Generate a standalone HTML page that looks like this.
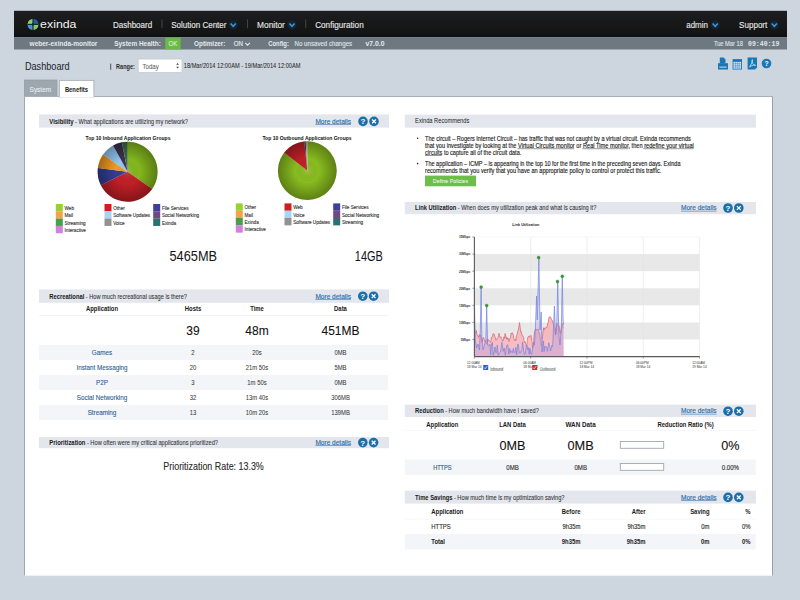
<!DOCTYPE html>
<html><head><meta charset="utf-8">
<style>
html,body{margin:0;padding:0;width:800px;height:600px;overflow:hidden;background:#cdd5de}
svg{position:absolute;left:0;top:0;font-family:"Liberation Sans",sans-serif}
</style></head><body>
<svg width="800" height="600" viewBox="0 0 800 600">
<defs>
<linearGradient id="topg" x1="0" y1="0" x2="0" y2="1"><stop offset="0" stop-color="#1d1e20"/><stop offset="0.85" stop-color="#141414"/><stop offset="1" stop-color="#0b0e12"/></linearGradient>
<radialGradient id="pg" cx="0.5" cy="0.5" r="0.5"><stop offset="0" stop-color="#fff" stop-opacity="0.14"/><stop offset="0.4" stop-color="#000" stop-opacity="0"/><stop offset="1" stop-color="#000" stop-opacity="0.32"/></radialGradient>
</defs>
<rect x="14" y="10.8" width="773" height="26.5" fill="url(#topg)"/>
<rect x="14" y="37.3" width="773" height="12.2" fill="#6d7881"/>
<g transform="translate(33,24.4)">
 <circle r="5.4" fill="#3f7cc8"/>
 <path d="M0,0 L0,-5.4 A5.4,5.4 0 0 0 -5.4,0 Z" fill="#94d060"/>
 <path d="M0,0 L0,5.4 A5.4,5.4 0 0 0 5.4,0 Z" fill="#8ccb58"/>
 <path d="M0,0 L5.4,0 A5.4,5.4 0 0 0 0,-5.4 Z" fill="#2d58a8"/>
 <path d="M0,0 L-5.4,0 A5.4,5.4 0 0 0 0,5.4 Z" fill="#4f92d4"/>
 <rect x="-0.55" y="-5.6" width="1.1" height="11.2" fill="#102a2a"/>
 <rect x="-5.6" y="-0.55" width="11.2" height="1.1" fill="#102a2a"/>
 <circle r="1.3" fill="#123030"/>
</g>
<text x="40.10" y="27.90" font-size="11.8" fill="#f2f2f2" textLength="36.40" lengthAdjust="spacingAndGlyphs">exinda</text>
<text x="112.90" y="27.60" font-size="8.8" fill="#e4e4e4" stroke="#e4e4e4" stroke-width="0.14" textLength="39.30" lengthAdjust="spacingAndGlyphs">Dashboard</text>
<text x="171.20" y="27.60" font-size="8.8" fill="#e4e4e4" stroke="#e4e4e4" stroke-width="0.14" textLength="55.30" lengthAdjust="spacingAndGlyphs">Solution Center</text>
<text x="257.10" y="27.60" font-size="8.8" fill="#e4e4e4" stroke="#e4e4e4" stroke-width="0.14" textLength="27.80" lengthAdjust="spacingAndGlyphs">Monitor</text>
<text x="315.20" y="27.60" font-size="8.8" fill="#e4e4e4" stroke="#e4e4e4" stroke-width="0.14" textLength="48.50" lengthAdjust="spacingAndGlyphs">Configuration</text>
<text x="686.20" y="27.60" font-size="8.8" fill="#e4e4e4" stroke="#e4e4e4" stroke-width="0.14" textLength="21.80" lengthAdjust="spacingAndGlyphs">admin</text>
<text x="739.10" y="27.60" font-size="8.8" fill="#e4e4e4" stroke="#e4e4e4" stroke-width="0.14" textLength="28.20" lengthAdjust="spacingAndGlyphs">Support</text>
<rect x="161.5" y="19.4" width="1" height="8.8" fill="#444"/>
<rect x="247.0" y="19.4" width="1" height="8.8" fill="#444"/>
<rect x="305.2" y="19.4" width="1" height="8.8" fill="#444"/>
<circle cx="233.2" cy="24.8" r="4.6" fill="#10263a"/>
<path d="M230.6,23.5 L233.2,26.3 L235.79999999999998,23.5" fill="none" stroke="#4f90c0" stroke-width="1.6"/>
<circle cx="292" cy="24.8" r="4.6" fill="#10263a"/>
<path d="M289.4,23.5 L292,26.3 L294.6,23.5" fill="none" stroke="#4f90c0" stroke-width="1.6"/>
<circle cx="715.2" cy="24.8" r="4.6" fill="#10263a"/>
<path d="M712.6,23.5 L715.2,26.3 L717.8000000000001,23.5" fill="none" stroke="#4f90c0" stroke-width="1.6"/>
<circle cx="774.3" cy="24.8" r="4.6" fill="#10263a"/>
<path d="M771.6999999999999,23.5 L774.3,26.3 L776.9,23.5" fill="none" stroke="#4f90c0" stroke-width="1.6"/>
<text x="29.60" y="46.40" font-size="6.8" font-weight="bold" fill="#e6eaed" textLength="67.80" lengthAdjust="spacingAndGlyphs">weber-exinda-monitor</text>
<text x="114.20" y="46.40" font-size="6.8" font-weight="bold" fill="#e6eaed" textLength="46.60" lengthAdjust="spacingAndGlyphs">System Health:</text>
<rect x="165.2" y="37.6" width="15.4" height="11.8" fill="#6abb46"/>
<text x="168.60" y="46.10" font-size="6.4" fill="#d8f0cc" stroke="#d8f0cc" stroke-width="0.14" textLength="8.60" lengthAdjust="spacingAndGlyphs">OK</text>
<text x="194.10" y="46.40" font-size="6.8" font-weight="bold" fill="#e6eaed" textLength="31.30" lengthAdjust="spacingAndGlyphs">Optimizer:</text>
<text x="233.80" y="46.40" font-size="6.6" fill="#e6eaed" stroke="#e6eaed" stroke-width="0.14" textLength="9.20" lengthAdjust="spacingAndGlyphs">ON</text>
<path d="M245.3,42.8 L247.6,45.2 L249.9,42.8" fill="none" stroke="#e6eaed" stroke-width="1.1"/>
<text x="268.20" y="46.40" font-size="6.8" font-weight="bold" fill="#e6eaed" textLength="20.70" lengthAdjust="spacingAndGlyphs">Config:</text>
<text x="294.60" y="46.40" font-size="6.6" fill="#dde2e6" stroke="#dde2e6" stroke-width="0.14" textLength="57.50" lengthAdjust="spacingAndGlyphs">No unsaved changes</text>
<text x="365.50" y="46.40" font-size="6.8" font-weight="bold" fill="#e6eaed" textLength="19.00" lengthAdjust="spacingAndGlyphs">v7.0.0</text>
<text x="713.90" y="46.40" font-size="6.4" fill="#dde2e6" stroke="#dde2e6" stroke-width="0.14" textLength="29.00" lengthAdjust="spacingAndGlyphs">Tue Mar 18</text>
<text x="748" y="46.4" font-size="6.4" font-family="Liberation Mono" font-weight="bold" fill="#e2e6e9" textLength="31.4" lengthAdjust="spacingAndGlyphs">09:40:19</text>
<text x="24.90" y="70.40" font-size="11.2" fill="#1d2731" stroke="#1d2731" stroke-width="0.05" textLength="44.70" lengthAdjust="spacingAndGlyphs">Dashboard</text>
<rect x="110.2" y="63.6" width="1" height="6.2" fill="#4a4f55"/>
<text x="116.10" y="68.90" font-size="6.9" font-weight="bold" fill="#2a2a2a" textLength="18.70" lengthAdjust="spacingAndGlyphs">Range:</text>
<rect x="138.2" y="59" width="43.8" height="13.5" rx="1" fill="#fff" stroke="#c3cad1" stroke-width="0.8"/>
<text x="142.50" y="68.60" font-size="6.6" fill="#555" stroke="#555" stroke-width="0.03" textLength="16.20" lengthAdjust="spacingAndGlyphs">Today</text>
<path d="M176.2,64.7 L177.6,63 L179,64.7 Z M176.2,66.8 L177.6,68.5 L179,66.8 Z" fill="#444"/>
<text x="183.80" y="68.20" font-size="6.3" fill="#2a2a2a" stroke="#2a2a2a" stroke-width="0.05" textLength="116.60" lengthAdjust="spacingAndGlyphs">18/Mar/2014 12:00AM - 19/Mar/2014 12:00AM</text>
<path d="M719.8,57.6 h3.8 l1.9,1.9 v3.9 h-5.7 z" fill="#1b76b6"/>
 <rect x="718" y="63.2" width="10" height="6.3" fill="#1b76b6"/>
 <rect x="719.4" y="66.6" width="7.2" height="1" fill="#cfe3f1"/>
 <rect x="732.6" y="59.1" width="9.4" height="10.4" fill="#1b76b6"/>
 <rect x="733.5" y="61.9" width="7.6" height="6.7" fill="#e4f0f8"/>
 <path d="M735.4,61.9 v6.7 M737.3,61.9 v6.7 M739.2,61.9 v6.7 M733.5,63.6 h7.6 M733.5,65.3 h7.6 M733.5,67 h7.6" stroke="#1b76b6" stroke-width="0.45"/>
 <path d="M747.6,57.6 h9.4 v9.9 l-2,2 h-7.4 z" fill="#1b76b6"/>
 <path d="M749.6,67 C751,64.5 753,61 752.5,59.8 C752,59 751.2,60.5 752.8,63.5 C754,65.5 755.5,65.8 755.6,65.2 C755.5,64.6 752,65 749.6,67 Z" stroke="#e2f0fa" stroke-width="0.7" fill="none"/>
 <circle cx="766.5" cy="63.5" r="4.8" fill="#1b76b6"/>
<text x="764.40" y="66.30" font-size="7.2" font-weight="bold" fill="#fff" textLength="4.20" lengthAdjust="spacingAndGlyphs">?</text>
<rect x="24.3" y="80" width="32.7" height="16.7" fill="#9ca7b0" stroke="#8d98a1" stroke-width="0.6"/>
<text x="29.60" y="92.00" font-size="6.8" fill="#f0f3f5" stroke="#f0f3f5" stroke-width="0.06" textLength="21.50" lengthAdjust="spacingAndGlyphs">System</text>
<rect x="24" y="96" width="749" height="480" fill="#ffffff"/>
<rect x="24" y="96" width="1" height="480" fill="#9fa8b0"/>
<rect x="772" y="96" width="1" height="480" fill="#98a1a9"/>
<rect x="24" y="96" width="749" height="1" fill="#a7b0b8"/>
<rect x="24" y="575.5" width="749" height="0.6" fill="#dfe4ea"/>
<rect x="59.4" y="80.4" width="34.5" height="16.6" fill="#ffffff" stroke="#aab2b9" stroke-width="0.9"/>
<rect x="59.7" y="95.5" width="33.8" height="2" fill="#ffffff"/>
<text x="64.90" y="92.00" font-size="6.8" font-weight="bold" fill="#222" textLength="23.10" lengthAdjust="spacingAndGlyphs">Benefits</text>
<rect x="39" y="114.4" width="350" height="13.199999999999989" fill="#e3e7ed"/>
<text x="49.30" y="123.60" font-size="6.8" font-weight="bold" fill="#1a1a1a" textLength="24.30" lengthAdjust="spacingAndGlyphs">Visibility</text>
<text x="75.00" y="123.60" font-size="7.0" fill="#303030" stroke="#303030" stroke-width="0.07" textLength="113.00" lengthAdjust="spacingAndGlyphs"> - What applications are utilizing my network?</text>
<text x="315.40" y="123.50" font-size="6.5" fill="#2a6cab" stroke="#2a6cab" stroke-width="0.14" textLength="35.60" lengthAdjust="spacingAndGlyphs">More details</text>
<rect x="315.4" y="124.0" width="35.6" height="0.55" fill="#2a6cab"/>
<circle cx="363" cy="121.4" r="4.8" fill="#1c6ea8"/>
<circle cx="374" cy="121.4" r="4.8" fill="#1c6ea8"/>
<text x="363" y="124.30000000000001" font-size="8" font-weight="bold" fill="#fff" text-anchor="middle">?</text>
<path d="M372.1,119.5 L375.9,123.30000000000001 M375.9,119.5 L372.1,123.30000000000001" stroke="#fff" stroke-width="1.3"/>
<rect x="39" y="289.4" width="350" height="13.400000000000034" fill="#e3e7ed"/>
<text x="49.30" y="298.60" font-size="6.8" font-weight="bold" fill="#1a1a1a" textLength="35.10" lengthAdjust="spacingAndGlyphs">Recreational</text>
<text x="85.80" y="298.60" font-size="7.0" fill="#303030" stroke="#303030" stroke-width="0.07" textLength="101.20" lengthAdjust="spacingAndGlyphs"> - How much recreational usage is there?</text>
<text x="315.40" y="298.60" font-size="6.5" fill="#2a6cab" stroke="#2a6cab" stroke-width="0.14" textLength="35.60" lengthAdjust="spacingAndGlyphs">More details</text>
<rect x="315.4" y="299.1" width="35.6" height="0.55" fill="#2a6cab"/>
<circle cx="362.8" cy="296.2" r="4.8" fill="#1c6ea8"/>
<circle cx="373.6" cy="296.2" r="4.8" fill="#1c6ea8"/>
<text x="362.8" y="299.09999999999997" font-size="8" font-weight="bold" fill="#fff" text-anchor="middle">?</text>
<path d="M371.70000000000005,294.3 L375.5,298.09999999999997 M375.5,294.3 L371.70000000000005,298.09999999999997" stroke="#fff" stroke-width="1.3"/>
<rect x="39" y="437" width="350" height="11.199999999999989" fill="#e3e7ed"/>
<text x="49.30" y="444.80" font-size="6.8" font-weight="bold" fill="#1a1a1a" textLength="36.20" lengthAdjust="spacingAndGlyphs">Prioritization</text>
<text x="86.90" y="444.80" font-size="7.0" fill="#303030" stroke="#303030" stroke-width="0.07" textLength="131.10" lengthAdjust="spacingAndGlyphs"> - How often were my critical applications prioritized?</text>
<text x="315.40" y="444.90" font-size="6.5" fill="#2a6cab" stroke="#2a6cab" stroke-width="0.14" textLength="35.60" lengthAdjust="spacingAndGlyphs">More details</text>
<rect x="315.4" y="445.4" width="35.6" height="0.55" fill="#2a6cab"/>
<circle cx="362.8" cy="442.6" r="4.8" fill="#1c6ea8"/>
<circle cx="373.6" cy="442.6" r="4.8" fill="#1c6ea8"/>
<text x="362.8" y="445.5" font-size="8" font-weight="bold" fill="#fff" text-anchor="middle">?</text>
<path d="M371.70000000000005,440.70000000000005 L375.5,444.5 M375.5,440.70000000000005 L371.70000000000005,444.5" stroke="#fff" stroke-width="1.3"/>
<rect x="404.8" y="114.6" width="351.2" height="13.100000000000009" fill="#e3e7ed"/>
<text x="415.10" y="123.20" font-size="6.8"  fill="#1a1a1a" textLength="54.20" lengthAdjust="spacingAndGlyphs">Exinda Recommends</text>
<rect x="404.8" y="202" width="351.2" height="12.199999999999989" fill="#e3e7ed"/>
<text x="415.10" y="210.30" font-size="6.8" font-weight="bold" fill="#1a1a1a" textLength="41.20" lengthAdjust="spacingAndGlyphs">Link Utilization</text>
<text x="457.70" y="210.30" font-size="7.0" fill="#303030" stroke="#303030" stroke-width="0.07" textLength="138.60" lengthAdjust="spacingAndGlyphs"> - When does my utilization peak and what is causing it?</text>
<text x="681.00" y="210.30" font-size="6.5" fill="#2a6cab" stroke="#2a6cab" stroke-width="0.14" textLength="35.60" lengthAdjust="spacingAndGlyphs">More details</text>
<rect x="681" y="210.8" width="35.6" height="0.55" fill="#2a6cab"/>
<circle cx="728" cy="208" r="4.8" fill="#1c6ea8"/>
<circle cx="738.8" cy="208" r="4.8" fill="#1c6ea8"/>
<text x="728" y="210.9" font-size="8" font-weight="bold" fill="#fff" text-anchor="middle">?</text>
<path d="M736.9,206.1 L740.6999999999999,209.9 M740.6999999999999,206.1 L736.9,209.9" stroke="#fff" stroke-width="1.3"/>
<rect x="404.8" y="404.6" width="351.2" height="12.399999999999977" fill="#e3e7ed"/>
<text x="415.10" y="413.30" font-size="6.8" font-weight="bold" fill="#1a1a1a" textLength="28.70" lengthAdjust="spacingAndGlyphs">Reduction</text>
<text x="445.20" y="413.30" font-size="7.0" fill="#303030" stroke="#303030" stroke-width="0.07" textLength="93.60" lengthAdjust="spacingAndGlyphs"> - How much bandwidth have I saved?</text>
<text x="681.00" y="413.30" font-size="6.5" fill="#2a6cab" stroke="#2a6cab" stroke-width="0.14" textLength="35.60" lengthAdjust="spacingAndGlyphs">More details</text>
<rect x="681" y="413.8" width="35.6" height="0.55" fill="#2a6cab"/>
<circle cx="728" cy="411.2" r="4.8" fill="#1c6ea8"/>
<circle cx="738.8" cy="411.2" r="4.8" fill="#1c6ea8"/>
<text x="728" y="414.09999999999997" font-size="8" font-weight="bold" fill="#fff" text-anchor="middle">?</text>
<path d="M736.9,409.3 L740.6999999999999,413.09999999999997 M740.6999999999999,409.3 L736.9,413.09999999999997" stroke="#fff" stroke-width="1.3"/>
<rect x="404.8" y="490.6" width="351.2" height="13.0" fill="#e3e7ed"/>
<text x="415.10" y="499.80" font-size="6.8" font-weight="bold" fill="#1a1a1a" textLength="37.40" lengthAdjust="spacingAndGlyphs">Time Savings</text>
<text x="453.90" y="499.80" font-size="7.0" fill="#303030" stroke="#303030" stroke-width="0.07" textLength="110.60" lengthAdjust="spacingAndGlyphs"> - How much time is my optimization saving?</text>
<text x="681.00" y="499.80" font-size="6.5" fill="#2a6cab" stroke="#2a6cab" stroke-width="0.14" textLength="35.60" lengthAdjust="spacingAndGlyphs">More details</text>
<rect x="681" y="500.3" width="35.6" height="0.55" fill="#2a6cab"/>
<circle cx="728" cy="497.4" r="4.8" fill="#1c6ea8"/>
<circle cx="738.8" cy="497.4" r="4.8" fill="#1c6ea8"/>
<text x="728" y="500.29999999999995" font-size="8" font-weight="bold" fill="#fff" text-anchor="middle">?</text>
<path d="M736.9,495.5 L740.6999999999999,499.29999999999995 M740.6999999999999,495.5 L736.9,499.29999999999995" stroke="#fff" stroke-width="1.3"/>
<text x="85.50" y="140.40" font-size="5.0" font-weight="bold" fill="#111" textLength="85.00" lengthAdjust="spacingAndGlyphs">Top 10 Inbound Application Groups</text>
<text x="262.40" y="140.00" font-size="5.0" font-weight="bold" fill="#111" textLength="89.20" lengthAdjust="spacingAndGlyphs">Top 10 Outbound Application Groups</text>
<path d="M127.6,171.7 L127.60,141.70 A30,30 0 0 1 152.17,188.91 Z" fill="#84b71e"/>
<path d="M127.6,171.7 L152.17,188.91 A30,30 0 0 1 100.87,185.32 Z" fill="#c21f27"/>
<path d="M127.6,171.7 L100.87,185.32 A30,30 0 0 1 97.82,168.04 Z" fill="#323d93"/>
<path d="M127.6,171.7 L97.82,168.04 A30,30 0 0 1 103.03,154.49 Z" fill="#f39a22"/>
<path d="M127.6,171.7 L103.03,154.49 A30,30 0 0 1 113.06,145.46 Z" fill="#92c7f2"/>
<path d="M127.6,171.7 L113.06,145.46 A30,30 0 0 1 121.88,142.25 Z" fill="#3e304f"/>
<path d="M127.6,171.7 L121.88,142.25 A30,30 0 0 1 127.60,141.70 Z" fill="#3b6f42"/>
<circle cx="127.6" cy="171.7" r="30" fill="url(#pg)"/>
<path d="M307.3,170.7 L307.30,141.30 A29.4,29.4 0 1 1 284.13,152.60 Z" fill="#88bc1f"/>
<path d="M307.3,170.7 L284.13,152.60 A29.4,29.4 0 0 1 304.23,141.46 Z" fill="#bf1f27"/>
<path d="M307.3,170.7 L304.23,141.46 A29.4,29.4 0 0 1 305.76,141.34 Z" fill="#4a3a78"/>
<path d="M307.3,170.7 L305.76,141.34 A29.4,29.4 0 0 1 307.30,141.30 Z" fill="#c8b888"/>
<circle cx="307.3" cy="170.7" r="29.4" fill="url(#pg)"/>
<rect x="55.8" y="204.0" width="7" height="7.35" fill="#98d132"/>
<text x="64.50" y="209.90" font-size="5.0" fill="#3a3a3a" stroke="#3a3a3a" stroke-width="0.14" textLength="9.48" lengthAdjust="spacingAndGlyphs">Web</text>
<rect x="55.8" y="211.3" width="7" height="7.35" fill="#f4a447"/>
<text x="64.50" y="217.20" font-size="5.0" fill="#3a3a3a" stroke="#3a3a3a" stroke-width="0.14" textLength="8.53" lengthAdjust="spacingAndGlyphs">Mail</text>
<rect x="55.8" y="218.6" width="7" height="7.35" fill="#44a04c"/>
<text x="64.50" y="224.50" font-size="5.0" fill="#3a3a3a" stroke="#3a3a3a" stroke-width="0.14" textLength="21.19" lengthAdjust="spacingAndGlyphs">Streaming</text>
<rect x="55.8" y="225.9" width="7" height="7.35" fill="#d47ee0"/>
<text x="64.50" y="231.80" font-size="5.0" fill="#3a3a3a" stroke="#3a3a3a" stroke-width="0.14" textLength="21.45" lengthAdjust="spacingAndGlyphs">Interactive</text>
<rect x="104.5" y="204.0" width="7" height="7.35" fill="#cc2020"/>
<text x="113.20" y="209.90" font-size="5.0" fill="#3a3a3a" stroke="#3a3a3a" stroke-width="0.14" textLength="11.63" lengthAdjust="spacingAndGlyphs">Other</text>
<rect x="104.5" y="211.3" width="7" height="7.35" fill="#a9d4f5"/>
<text x="113.20" y="217.20" font-size="5.0" fill="#3a3a3a" stroke="#3a3a3a" stroke-width="0.14" textLength="36.96" lengthAdjust="spacingAndGlyphs">Software Updates</text>
<rect x="104.5" y="218.6" width="7" height="7.35" fill="#929292"/>
<text x="113.20" y="224.50" font-size="5.0" fill="#3a3a3a" stroke="#3a3a3a" stroke-width="0.14" textLength="11.38" lengthAdjust="spacingAndGlyphs">Voice</text>
<rect x="153.2" y="204.0" width="7" height="7.35" fill="#40409a"/>
<text x="161.90" y="209.90" font-size="5.0" fill="#3a3a3a" stroke="#3a3a3a" stroke-width="0.14" textLength="26.62" lengthAdjust="spacingAndGlyphs">File Services</text>
<rect x="153.2" y="211.3" width="7" height="7.35" fill="#6f4a82"/>
<text x="161.90" y="217.20" font-size="5.0" fill="#3a3a3a" stroke="#3a3a3a" stroke-width="0.14" textLength="37.22" lengthAdjust="spacingAndGlyphs">Social Networking</text>
<rect x="153.2" y="218.6" width="7" height="7.35" fill="#2c7070"/>
<text x="161.90" y="224.50" font-size="5.0" fill="#3a3a3a" stroke="#3a3a3a" stroke-width="0.14" textLength="14.22" lengthAdjust="spacingAndGlyphs">Exinda</text>
<rect x="235.8" y="203.4" width="7" height="7.35" fill="#98d132"/>
<text x="244.50" y="209.30" font-size="5.0" fill="#3a3a3a" stroke="#3a3a3a" stroke-width="0.14" textLength="11.63" lengthAdjust="spacingAndGlyphs">Other</text>
<rect x="235.8" y="210.7" width="7" height="7.35" fill="#f4a447"/>
<text x="244.50" y="216.60" font-size="5.0" fill="#3a3a3a" stroke="#3a3a3a" stroke-width="0.14" textLength="8.53" lengthAdjust="spacingAndGlyphs">Mail</text>
<rect x="235.8" y="218.0" width="7" height="7.35" fill="#44a04c"/>
<text x="244.50" y="223.90" font-size="5.0" fill="#3a3a3a" stroke="#3a3a3a" stroke-width="0.14" textLength="14.22" lengthAdjust="spacingAndGlyphs">Exinda</text>
<rect x="235.8" y="225.3" width="7" height="7.35" fill="#d47ee0"/>
<text x="244.50" y="231.20" font-size="5.0" fill="#3a3a3a" stroke="#3a3a3a" stroke-width="0.14" textLength="21.45" lengthAdjust="spacingAndGlyphs">Interactive</text>
<rect x="284.5" y="203.4" width="7" height="7.35" fill="#cc2020"/>
<text x="293.20" y="209.30" font-size="5.0" fill="#3a3a3a" stroke="#3a3a3a" stroke-width="0.14" textLength="9.48" lengthAdjust="spacingAndGlyphs">Web</text>
<rect x="284.5" y="210.7" width="7" height="7.35" fill="#a9d4f5"/>
<text x="293.20" y="216.60" font-size="5.0" fill="#3a3a3a" stroke="#3a3a3a" stroke-width="0.14" textLength="11.38" lengthAdjust="spacingAndGlyphs">Voice</text>
<rect x="284.5" y="218.0" width="7" height="7.35" fill="#929292"/>
<text x="293.20" y="223.90" font-size="5.0" fill="#3a3a3a" stroke="#3a3a3a" stroke-width="0.14" textLength="36.96" lengthAdjust="spacingAndGlyphs">Software Updates</text>
<rect x="333.2" y="203.4" width="7" height="7.35" fill="#40409a"/>
<text x="341.90" y="209.30" font-size="5.0" fill="#3a3a3a" stroke="#3a3a3a" stroke-width="0.14" textLength="26.62" lengthAdjust="spacingAndGlyphs">File Services</text>
<rect x="333.2" y="210.7" width="7" height="7.35" fill="#6f4a82"/>
<text x="341.90" y="216.60" font-size="5.0" fill="#3a3a3a" stroke="#3a3a3a" stroke-width="0.14" textLength="37.22" lengthAdjust="spacingAndGlyphs">Social Networking</text>
<rect x="333.2" y="218.0" width="7" height="7.35" fill="#2c7070"/>
<text x="341.90" y="223.90" font-size="5.0" fill="#3a3a3a" stroke="#3a3a3a" stroke-width="0.14" textLength="21.19" lengthAdjust="spacingAndGlyphs">Streaming</text>
<text x="169.50" y="261.00" font-size="13.8" fill="#151515" textLength="47.60" lengthAdjust="spacingAndGlyphs">5465MB</text>
<text x="354.80" y="261.00" font-size="13.8" fill="#151515" textLength="28.00" lengthAdjust="spacingAndGlyphs">14GB</text>
<rect x="39" y="315" width="350" height="0.7" fill="#eef0f2"/>
<text x="85.97" y="311.30" font-size="6.4" font-weight="bold" fill="#1a1a1a" textLength="32.06" lengthAdjust="spacingAndGlyphs">Application</text>
<text x="184.82" y="311.30" font-size="6.4" font-weight="bold" fill="#1a1a1a" textLength="16.36" lengthAdjust="spacingAndGlyphs">Hosts</text>
<text x="250.18" y="311.30" font-size="6.4" font-weight="bold" fill="#1a1a1a" textLength="13.64" lengthAdjust="spacingAndGlyphs">Time</text>
<text x="334.12" y="311.30" font-size="6.4" font-weight="bold" fill="#1a1a1a" textLength="12.76" lengthAdjust="spacingAndGlyphs">Data</text>
<text x="186.34" y="334.90" font-size="13.6" fill="#111" stroke="#111" stroke-width="0.1" textLength="13.31" lengthAdjust="spacingAndGlyphs">39</text>
<text x="245.36" y="334.90" font-size="13.6" fill="#111" stroke="#111" stroke-width="0.1" textLength="23.28" lengthAdjust="spacingAndGlyphs">48m</text>
<text x="321.54" y="334.90" font-size="13.6" fill="#111" stroke="#111" stroke-width="0.1" textLength="37.92" lengthAdjust="spacingAndGlyphs">451MB</text>
<rect x="39" y="345" width="349" height="15" fill="#f3f5f8"/>
<text x="91.84" y="354.60" font-size="6.5" fill="#2d5f96" stroke="#2d5f96" stroke-width="0.1" textLength="20.32" lengthAdjust="spacingAndGlyphs">Games</text>
<text x="191.36" y="354.60" font-size="6.4" fill="#3a3a3a" stroke="#3a3a3a" stroke-width="0.05" textLength="3.27" lengthAdjust="spacingAndGlyphs">2</text>
<text x="252.25" y="354.60" font-size="6.4" fill="#3a3a3a" stroke="#3a3a3a" stroke-width="0.05" textLength="9.49" lengthAdjust="spacingAndGlyphs">20s</text>
<text x="334.45" y="354.60" font-size="6.4" fill="#3a3a3a" stroke="#3a3a3a" stroke-width="0.05" textLength="12.11" lengthAdjust="spacingAndGlyphs">0MB</text>
<text x="76.42" y="369.60" font-size="6.5" fill="#2d5f96" stroke="#2d5f96" stroke-width="0.1" textLength="51.17" lengthAdjust="spacingAndGlyphs">Instant Messaging</text>
<text x="189.73" y="369.60" font-size="6.4" fill="#3a3a3a" stroke="#3a3a3a" stroke-width="0.05" textLength="6.55" lengthAdjust="spacingAndGlyphs">20</text>
<text x="245.71" y="369.60" font-size="6.4" fill="#3a3a3a" stroke="#3a3a3a" stroke-width="0.05" textLength="22.58" lengthAdjust="spacingAndGlyphs">21m 50s</text>
<text x="334.45" y="369.60" font-size="6.4" fill="#3a3a3a" stroke="#3a3a3a" stroke-width="0.05" textLength="12.11" lengthAdjust="spacingAndGlyphs">5MB</text>
<rect x="39" y="375" width="349" height="15" fill="#f3f5f8"/>
<text x="96.04" y="384.60" font-size="6.5" fill="#2d5f96" stroke="#2d5f96" stroke-width="0.1" textLength="11.92" lengthAdjust="spacingAndGlyphs">P2P</text>
<text x="191.36" y="384.60" font-size="6.4" fill="#3a3a3a" stroke="#3a3a3a" stroke-width="0.05" textLength="3.27" lengthAdjust="spacingAndGlyphs">3</text>
<text x="247.35" y="384.60" font-size="6.4" fill="#3a3a3a" stroke="#3a3a3a" stroke-width="0.05" textLength="19.31" lengthAdjust="spacingAndGlyphs">1m 50s</text>
<text x="334.45" y="384.60" font-size="6.4" fill="#3a3a3a" stroke="#3a3a3a" stroke-width="0.05" textLength="12.11" lengthAdjust="spacingAndGlyphs">0MB</text>
<text x="76.77" y="399.60" font-size="6.5" fill="#2d5f96" stroke="#2d5f96" stroke-width="0.1" textLength="50.46" lengthAdjust="spacingAndGlyphs">Social Networking</text>
<text x="189.73" y="399.60" font-size="6.4" fill="#3a3a3a" stroke="#3a3a3a" stroke-width="0.05" textLength="6.55" lengthAdjust="spacingAndGlyphs">32</text>
<text x="245.71" y="399.60" font-size="6.4" fill="#3a3a3a" stroke="#3a3a3a" stroke-width="0.05" textLength="22.58" lengthAdjust="spacingAndGlyphs">13m 40s</text>
<text x="331.17" y="399.60" font-size="6.4" fill="#3a3a3a" stroke="#3a3a3a" stroke-width="0.05" textLength="18.66" lengthAdjust="spacingAndGlyphs">306MB</text>
<rect x="39" y="405" width="349" height="15" fill="#f3f5f8"/>
<text x="87.63" y="414.60" font-size="6.5" fill="#2d5f96" stroke="#2d5f96" stroke-width="0.1" textLength="28.74" lengthAdjust="spacingAndGlyphs">Streaming</text>
<text x="189.73" y="414.60" font-size="6.4" fill="#3a3a3a" stroke="#3a3a3a" stroke-width="0.05" textLength="6.55" lengthAdjust="spacingAndGlyphs">13</text>
<text x="245.71" y="414.60" font-size="6.4" fill="#3a3a3a" stroke="#3a3a3a" stroke-width="0.05" textLength="22.58" lengthAdjust="spacingAndGlyphs">10m 20s</text>
<text x="331.17" y="414.60" font-size="6.4" fill="#3a3a3a" stroke="#3a3a3a" stroke-width="0.05" textLength="18.66" lengthAdjust="spacingAndGlyphs">139MB</text>
<text x="163.30" y="470.30" font-size="10.4" fill="#2a2a2a" stroke="#2a2a2a" stroke-width="0.1" textLength="100.50" lengthAdjust="spacingAndGlyphs">Prioritization Rate: 13.3%</text>
<circle cx="417.6" cy="138.3" r="0.8" fill="#222"/>
<circle cx="417.6" cy="163.6" r="0.8" fill="#222"/>
<text x="425.00" y="140.60" font-size="6.7" fill="#222" stroke="#222" stroke-width="0.14" textLength="265.80" lengthAdjust="spacingAndGlyphs">The circuit – Rogers Internet Circuit – has traffic that was not caught by a virtual circuit. Exinda recommends</text>
<text x="425.00" y="147.90" font-size="6.7" fill="#222" stroke="#222" stroke-width="0.14" textLength="268.80" lengthAdjust="spacingAndGlyphs">that you investigate by looking at the Virtual Circuits monitor or Real Time monitor, then redefine your virtual</text>
<text x="425.00" y="154.80" font-size="6.7" fill="#222" stroke="#222" stroke-width="0.14" textLength="96.30" lengthAdjust="spacingAndGlyphs">circuits to capture all of the circuit data.</text>
<text x="425.00" y="165.90" font-size="6.7" fill="#222" stroke="#222" stroke-width="0.14" textLength="255.50" lengthAdjust="spacingAndGlyphs">The application – ICMP – is appearing in the top 10 for the first time in the preceding seven days. Exinda</text>
<text x="425.00" y="172.70" font-size="6.7" fill="#222" stroke="#222" stroke-width="0.14" textLength="236.30" lengthAdjust="spacingAndGlyphs">recommends that you verify that you have an appropriate policy to control or protect this traffic.</text>
<rect x="517.5" y="148.6" width="56.8" height="0.5" fill="#333"/>
<rect x="582.5" y="148.6" width="45.8" height="0.5" fill="#333"/>
<rect x="643.3" y="148.6" width="50.5" height="0.5" fill="#333"/>
<rect x="425.0" y="155.5" width="16.8" height="0.5" fill="#333"/>
<rect x="425" y="175.6" width="51" height="10.7" fill="#6cbd4a"/>
<text x="432.85" y="183.20" font-size="6.2" fill="#f2faee" stroke="#f2faee" stroke-width="0.05" textLength="35.30" lengthAdjust="spacingAndGlyphs">Define Policies</text>
<rect x="474.4" y="254.09" width="225.2" height="17.09" fill="#e8e8e8"/>
<rect x="474.4" y="288.26" width="225.2" height="17.09" fill="#e8e8e8"/>
<rect x="474.4" y="322.43" width="225.2" height="17.09" fill="#e8e8e8"/>
<line x1="474.40" y1="237.0" x2="474.40" y2="356.6" stroke="#e2e2e2" stroke-width="0.6"/>
<line x1="530.70" y1="237.0" x2="530.70" y2="356.6" stroke="#e2e2e2" stroke-width="0.6"/>
<line x1="587.00" y1="237.0" x2="587.00" y2="356.6" stroke="#e2e2e2" stroke-width="0.6"/>
<line x1="643.30" y1="237.0" x2="643.30" y2="356.6" stroke="#e2e2e2" stroke-width="0.6"/>
<line x1="699.60" y1="237.0" x2="699.60" y2="356.6" stroke="#e2e2e2" stroke-width="0.6"/>
<line x1="474.4" y1="237.0" x2="699.6" y2="237.0" stroke="#eeeeee" stroke-width="0.5"/>
<polygon points="474.4,356.6 474.50,335.22 475.10,332.46 475.70,332.66 476.30,330.17 476.90,334.31 477.50,335.66 478.10,335.96 478.70,337.33 479.30,334.66 479.90,335.81 480.50,335.36 481.10,336.95 481.70,339.92 482.30,341.99 482.90,337.99 483.50,337.53 484.10,338.76 484.70,341.37 485.30,340.94 485.90,341.35 486.50,343.60 487.10,338.90 487.70,341.88 488.30,339.52 488.90,339.78 489.50,340.57 490.10,341.86 490.70,342.29 491.30,337.70 491.90,337.66 492.50,336.28 493.10,333.51 493.70,334.01 494.30,334.28 494.90,336.66 495.50,337.96 496.10,340.34 496.70,339.53 497.30,338.28 497.90,337.68 498.50,335.29 499.10,333.32 499.70,336.70 500.30,337.48 500.90,336.67 501.50,338.83 502.10,339.21 502.70,341.35 503.30,340.26 503.90,336.82 504.50,338.36 505.10,333.52 505.70,336.04 506.30,338.73 506.90,337.27 507.50,339.45 508.10,338.07 508.70,341.44 509.30,341.11 509.90,338.17 510.50,337.40 511.10,333.05 511.70,333.93 512.30,332.68 512.90,333.95 513.50,335.81 514.10,339.60 514.70,340.66 515.30,339.19 515.90,340.62 516.50,335.32 517.10,334.84 517.70,331.30 518.30,330.07 518.90,327.12 519.50,322.55 520.10,326.80 520.70,331.84 521.30,331.65 521.90,335.08 522.50,335.29 523.10,336.57 523.70,337.81 524.30,342.43 524.90,341.12 525.50,342.89 526.10,344.72 526.70,346.43 527.30,339.35 527.90,337.38 528.50,336.47 529.10,337.04 529.70,335.85 530.30,336.40 530.90,335.43 531.50,337.63 532.10,341.38 532.70,347.69 533.30,347.01 533.90,337.46 534.50,331.58 535.10,330.22 535.70,328.63 536.30,329.23 536.90,330.29 537.50,329.46 538.10,329.02 538.70,332.04 539.30,333.02 539.90,335.09 540.50,341.33 541.10,345.37 541.70,345.80 542.30,339.45 542.90,332.91 543.50,327.79 544.10,330.01 544.70,327.98 545.30,327.95 545.90,328.21 546.50,327.03 547.10,327.11 547.70,323.11 548.30,322.74 548.90,317.52 549.50,316.76 550.10,316.99 550.70,317.05 551.30,319.43 551.90,319.76 552.50,321.05 553.10,323.22 553.70,324.50 554.30,327.60 554.90,328.51 555.50,334.65 556.10,329.90 556.70,324.25 557.30,323.36 557.90,324.68 558.50,325.65 559.10,325.67 559.70,330.87 560.30,333.50 560.90,329.98 561.50,327.26 562.10,323.49 562.70,325.44 563.30,328.37 563.6,356.6" fill="#f4b1ba" fill-opacity="0.85"/>
<polyline points="474.50,335.22 475.10,332.46 475.70,332.66 476.30,330.17 476.90,334.31 477.50,335.66 478.10,335.96 478.70,337.33 479.30,334.66 479.90,335.81 480.50,335.36 481.10,336.95 481.70,339.92 482.30,341.99 482.90,337.99 483.50,337.53 484.10,338.76 484.70,341.37 485.30,340.94 485.90,341.35 486.50,343.60 487.10,338.90 487.70,341.88 488.30,339.52 488.90,339.78 489.50,340.57 490.10,341.86 490.70,342.29 491.30,337.70 491.90,337.66 492.50,336.28 493.10,333.51 493.70,334.01 494.30,334.28 494.90,336.66 495.50,337.96 496.10,340.34 496.70,339.53 497.30,338.28 497.90,337.68 498.50,335.29 499.10,333.32 499.70,336.70 500.30,337.48 500.90,336.67 501.50,338.83 502.10,339.21 502.70,341.35 503.30,340.26 503.90,336.82 504.50,338.36 505.10,333.52 505.70,336.04 506.30,338.73 506.90,337.27 507.50,339.45 508.10,338.07 508.70,341.44 509.30,341.11 509.90,338.17 510.50,337.40 511.10,333.05 511.70,333.93 512.30,332.68 512.90,333.95 513.50,335.81 514.10,339.60 514.70,340.66 515.30,339.19 515.90,340.62 516.50,335.32 517.10,334.84 517.70,331.30 518.30,330.07 518.90,327.12 519.50,322.55 520.10,326.80 520.70,331.84 521.30,331.65 521.90,335.08 522.50,335.29 523.10,336.57 523.70,337.81 524.30,342.43 524.90,341.12 525.50,342.89 526.10,344.72 526.70,346.43 527.30,339.35 527.90,337.38 528.50,336.47 529.10,337.04 529.70,335.85 530.30,336.40 530.90,335.43 531.50,337.63 532.10,341.38 532.70,347.69 533.30,347.01 533.90,337.46 534.50,331.58 535.10,330.22 535.70,328.63 536.30,329.23 536.90,330.29 537.50,329.46 538.10,329.02 538.70,332.04 539.30,333.02 539.90,335.09 540.50,341.33 541.10,345.37 541.70,345.80 542.30,339.45 542.90,332.91 543.50,327.79 544.10,330.01 544.70,327.98 545.30,327.95 545.90,328.21 546.50,327.03 547.10,327.11 547.70,323.11 548.30,322.74 548.90,317.52 549.50,316.76 550.10,316.99 550.70,317.05 551.30,319.43 551.90,319.76 552.50,321.05 553.10,323.22 553.70,324.50 554.30,327.60 554.90,328.51 555.50,334.65 556.10,329.90 556.70,324.25 557.30,323.36 557.90,324.68 558.50,325.65 559.10,325.67 559.70,330.87 560.30,333.50 560.90,329.98 561.50,327.26 562.10,323.49 562.70,325.44 563.30,328.37" fill="none" stroke="#d5606f" stroke-width="0.7"/>
<polygon points="474.4,356.6 474.50,306.00 475.30,340.00 476.50,348.00 478.00,344.00 479.50,350.00 480.30,330.00 481.10,287.10 481.90,340.00 483.00,350.00 484.50,345.00 485.80,340.00 486.70,305.50 487.60,345.00 489.00,345.57 490.01,344.18 490.63,354.84 491.49,343.98 492.36,342.37 493.23,355.21 494.26,351.40 494.99,346.95 495.67,352.42 496.54,352.52 497.30,345.01 498.31,355.30 499.33,352.88 500.34,351.99 501.06,348.99 501.84,342.39 502.45,345.77 503.18,351.35 504.26,348.04 505.33,355.34 506.40,346.92 507.11,345.06 507.81,344.76 508.72,354.15 509.74,348.47 510.67,352.80 511.31,350.92 512.37,352.56 513.34,348.45 514.03,352.65 514.80,352.81 515.88,347.34 516.68,354.78 517.65,344.30 518.31,344.04 519.36,352.89 520.04,353.16 521.13,350.87 521.90,349.41 522.57,342.19 523.65,350.77 524.52,354.60 525.33,353.77 526.35,344.85 527.07,345.96 527.79,349.92 528.52,347.66 529.19,354.29 529.96,348.19 530.86,354.21 531.67,354.39 532.52,349.18 533.38,342.25 534.50,345.00 535.50,325.00 536.60,296.00 537.30,320.00 538.90,257.30 540.00,330.00 541.20,312.00 542.00,352.00 543.50,341.11 544.10,351.59 544.79,346.05 545.75,347.46 546.51,346.81 547.39,351.33 548.04,347.53 548.77,342.71 549.75,346.63 550.64,350.92 551.69,345.54 552.60,346.59 553.00,340.00 554.40,306.00 555.50,335.00 556.60,330.00 557.75,281.20 558.80,335.00 560.00,345.00 561.30,330.00 562.30,276.20 563.10,320.00 563.60,325.00 563.6,356.6" fill="#b49be0" fill-opacity="0.38"/>
<polyline points="474.50,306.00 475.30,340.00 476.50,348.00 478.00,344.00 479.50,350.00 480.30,330.00 481.10,287.10 481.90,340.00 483.00,350.00 484.50,345.00 485.80,340.00 486.70,305.50 487.60,345.00 489.00,345.57 490.01,344.18 490.63,354.84 491.49,343.98 492.36,342.37 493.23,355.21 494.26,351.40 494.99,346.95 495.67,352.42 496.54,352.52 497.30,345.01 498.31,355.30 499.33,352.88 500.34,351.99 501.06,348.99 501.84,342.39 502.45,345.77 503.18,351.35 504.26,348.04 505.33,355.34 506.40,346.92 507.11,345.06 507.81,344.76 508.72,354.15 509.74,348.47 510.67,352.80 511.31,350.92 512.37,352.56 513.34,348.45 514.03,352.65 514.80,352.81 515.88,347.34 516.68,354.78 517.65,344.30 518.31,344.04 519.36,352.89 520.04,353.16 521.13,350.87 521.90,349.41 522.57,342.19 523.65,350.77 524.52,354.60 525.33,353.77 526.35,344.85 527.07,345.96 527.79,349.92 528.52,347.66 529.19,354.29 529.96,348.19 530.86,354.21 531.67,354.39 532.52,349.18 533.38,342.25 534.50,345.00 535.50,325.00 536.60,296.00 537.30,320.00 538.90,257.30 540.00,330.00 541.20,312.00 542.00,352.00 543.50,341.11 544.10,351.59 544.79,346.05 545.75,347.46 546.51,346.81 547.39,351.33 548.04,347.53 548.77,342.71 549.75,346.63 550.64,350.92 551.69,345.54 552.60,346.59 553.00,340.00 554.40,306.00 555.50,335.00 556.60,330.00 557.75,281.20 558.80,335.00 560.00,345.00 561.30,330.00 562.30,276.20 563.10,320.00 563.60,325.00" fill="none" stroke="#7082e0" stroke-width="0.7"/>
<circle cx="481.1" cy="287.1" r="1.5" fill="#3a9a3a" stroke="#1e6e1e" stroke-width="0.3"/>
<circle cx="486.7" cy="305.5" r="1.5" fill="#3a9a3a" stroke="#1e6e1e" stroke-width="0.3"/>
<circle cx="538.6" cy="257.6" r="1.5" fill="#3a9a3a" stroke="#1e6e1e" stroke-width="0.3"/>
<circle cx="557.5" cy="281.4" r="1.5" fill="#3a9a3a" stroke="#1e6e1e" stroke-width="0.3"/>
<circle cx="562.3" cy="276.2" r="1.5" fill="#3a9a3a" stroke="#1e6e1e" stroke-width="0.3"/>
<line x1="474.4" y1="237.0" x2="474.4" y2="356.6" stroke="#5a5a5a" stroke-width="1.1"/>
<line x1="474.4" y1="356.6" x2="699.6" y2="356.6" stroke="#5a5a5a" stroke-width="1.1"/>
<line x1="472.4" y1="237.00" x2="474.4" y2="237.00" stroke="#555" stroke-width="0.6"/>
<text x="459.0" y="238.40" font-size="3.8" font-weight="bold" fill="#333" textLength="11.3" lengthAdjust="spacingAndGlyphs" transform="translate(0,0)">35Mbps</text>
<line x1="472.4" y1="254.09" x2="474.4" y2="254.09" stroke="#555" stroke-width="0.6"/>
<text x="459.0" y="255.49" font-size="3.8" font-weight="bold" fill="#333" textLength="11.3" lengthAdjust="spacingAndGlyphs" transform="translate(0,0)">30Mbps</text>
<line x1="472.4" y1="271.17" x2="474.4" y2="271.17" stroke="#555" stroke-width="0.6"/>
<text x="459.0" y="272.57" font-size="3.8" font-weight="bold" fill="#333" textLength="11.3" lengthAdjust="spacingAndGlyphs" transform="translate(0,0)">25Mbps</text>
<line x1="472.4" y1="288.26" x2="474.4" y2="288.26" stroke="#555" stroke-width="0.6"/>
<text x="459.0" y="289.66" font-size="3.8" font-weight="bold" fill="#333" textLength="11.3" lengthAdjust="spacingAndGlyphs" transform="translate(0,0)">20Mbps</text>
<line x1="472.4" y1="305.34" x2="474.4" y2="305.34" stroke="#555" stroke-width="0.6"/>
<text x="459.0" y="306.74" font-size="3.8" font-weight="bold" fill="#333" textLength="11.3" lengthAdjust="spacingAndGlyphs" transform="translate(0,0)">15Mbps</text>
<line x1="472.4" y1="322.43" x2="474.4" y2="322.43" stroke="#555" stroke-width="0.6"/>
<text x="459.0" y="323.83" font-size="3.8" font-weight="bold" fill="#333" textLength="11.3" lengthAdjust="spacingAndGlyphs" transform="translate(0,0)">10Mbps</text>
<line x1="472.4" y1="339.51" x2="474.4" y2="339.51" stroke="#555" stroke-width="0.6"/>
<text x="459.0" y="340.91" font-size="3.8" font-weight="bold" fill="#333" textLength="9.6" lengthAdjust="spacingAndGlyphs" transform="translate(1.7,0)">5Mbps</text>
<line x1="474.40" y1="356.6" x2="474.40" y2="358.6" stroke="#555" stroke-width="0.6"/>
<text x="467.00" y="364.00" font-size="3.8" fill="#333" textLength="12.7" lengthAdjust="spacingAndGlyphs">12:00AM</text>
<text x="467.00" y="367.50" font-size="3.8" fill="#333" textLength="14.5" lengthAdjust="spacingAndGlyphs">18 Mar 14</text>
<line x1="530.70" y1="356.6" x2="530.70" y2="358.6" stroke="#555" stroke-width="0.6"/>
<text x="523.30" y="364.00" font-size="3.8" fill="#333" textLength="12.7" lengthAdjust="spacingAndGlyphs">06:00AM</text>
<text x="523.30" y="367.50" font-size="3.8" fill="#333" textLength="14.5" lengthAdjust="spacingAndGlyphs">18 Mar 14</text>
<line x1="587.00" y1="356.6" x2="587.00" y2="358.6" stroke="#555" stroke-width="0.6"/>
<text x="579.60" y="364.00" font-size="3.8" fill="#333" textLength="12.7" lengthAdjust="spacingAndGlyphs">12:00PM</text>
<text x="579.60" y="367.50" font-size="3.8" fill="#333" textLength="14.5" lengthAdjust="spacingAndGlyphs">18 Mar 14</text>
<line x1="643.30" y1="356.6" x2="643.30" y2="358.6" stroke="#555" stroke-width="0.6"/>
<text x="635.90" y="364.00" font-size="3.8" fill="#333" textLength="12.7" lengthAdjust="spacingAndGlyphs">06:00PM</text>
<text x="635.90" y="367.50" font-size="3.8" fill="#333" textLength="14.5" lengthAdjust="spacingAndGlyphs">18 Mar 14</text>
<line x1="699.60" y1="356.6" x2="699.60" y2="358.6" stroke="#555" stroke-width="0.6"/>
<text x="692.20" y="364.00" font-size="3.8" fill="#333" textLength="12.7" lengthAdjust="spacingAndGlyphs">12:00AM</text>
<text x="692.20" y="367.50" font-size="3.8" fill="#333" textLength="14.5" lengthAdjust="spacingAndGlyphs">19 Mar 14</text>
<text x="525.8" y="226" text-anchor="middle" font-size="3.8" font-weight="bold" fill="#222">Link Utilization</text>
<rect x="483.2" y="365" width="5" height="5" fill="#2f5fd8"/><path d="M484.2,367.6 l1,1.2 l2,-2.6" stroke="#fff" stroke-width="0.7" fill="none"/>
<text x="490.2" y="369.5" font-size="3.6" text-decoration="underline" fill="#444">Inbound</text>
<rect x="532.2" y="365" width="5" height="5" fill="#d92a2a"/><path d="M533.2,367.6 l1,1.2 l2,-2.6" stroke="#fff" stroke-width="0.7" fill="none"/>
<text x="539.7" y="369.5" font-size="3.6" text-decoration="underline" fill="#444">Outbound</text>
<text x="426.30" y="427.20" font-size="6.4" font-weight="bold" fill="#1a1a1a" textLength="32.00" lengthAdjust="spacingAndGlyphs">Application</text>
<text x="499.25" y="427.20" font-size="6.4" font-weight="bold" fill="#1a1a1a" textLength="26.50" lengthAdjust="spacingAndGlyphs">LAN Data</text>
<text x="565.50" y="427.20" font-size="6.4" font-weight="bold" fill="#1a1a1a" textLength="30.20" lengthAdjust="spacingAndGlyphs">WAN Data</text>
<text x="657.50" y="427.20" font-size="6.4" font-weight="bold" fill="#1a1a1a" textLength="56.20" lengthAdjust="spacingAndGlyphs">Reduction Ratio (%)</text>
<rect x="404.8" y="430" width="351" height="0.6" fill="#f1f2f4"/>
<text x="499.50" y="450.20" font-size="13.6" fill="#111" stroke="#111" stroke-width="0.1" textLength="26.00" lengthAdjust="spacingAndGlyphs">0MB</text>
<text x="567.50" y="450.20" font-size="13.6" fill="#111" stroke="#111" stroke-width="0.1" textLength="26.20" lengthAdjust="spacingAndGlyphs">0MB</text>
<text x="721.25" y="450.20" font-size="13.6" fill="#111" stroke="#111" stroke-width="0.1" textLength="18.30" lengthAdjust="spacingAndGlyphs">0%</text>
<rect x="404.8" y="459.5" width="351" height="15.5" fill="#f3f5f8"/>
<text x="433.15" y="470.20" font-size="6.4" fill="#2d5f96" stroke="#2d5f96" stroke-width="0.14" textLength="18.30" lengthAdjust="spacingAndGlyphs">HTTPS</text>
<text x="506.25" y="470.20" font-size="6.4" fill="#333" stroke="#333" stroke-width="0.14" textLength="12.50" lengthAdjust="spacingAndGlyphs">0MB</text>
<text x="574.45" y="470.20" font-size="6.4" fill="#333" stroke="#333" stroke-width="0.14" textLength="12.50" lengthAdjust="spacingAndGlyphs">0MB</text>
<text x="721.75" y="470.20" font-size="6.4" fill="#333" stroke="#333" stroke-width="0.14" textLength="17.30" lengthAdjust="spacingAndGlyphs">0.00%</text>
<rect x="620.3" y="441.5" width="43.4" height="6.8" fill="#fff" stroke="#a2a7ad" stroke-width="0.9"/>
<rect x="620.3" y="463.5" width="43.4" height="6.8" fill="#fff" stroke="#a2a7ad" stroke-width="0.9"/>
<rect x="404.8" y="518.8" width="351" height="0.6" fill="#f1f2f4"/>
<rect x="404.8" y="534" width="351" height="15.5" fill="#f3f5f8"/>
<text x="431.30" y="513.80" font-size="6.4" font-weight="bold" fill="#1a1a1a" textLength="32.06" lengthAdjust="spacingAndGlyphs">Application</text>
<text x="561.85" y="513.80" font-size="6.4" font-weight="bold" fill="#1a1a1a" textLength="18.65" lengthAdjust="spacingAndGlyphs">Before</text>
<text x="631.76" y="513.80" font-size="6.4" font-weight="bold" fill="#1a1a1a" textLength="13.74" lengthAdjust="spacingAndGlyphs">After</text>
<text x="690.19" y="513.80" font-size="6.4" font-weight="bold" fill="#1a1a1a" textLength="19.31" lengthAdjust="spacingAndGlyphs">Saving</text>
<text x="745.26" y="513.80" font-size="6.4" font-weight="bold" fill="#1a1a1a" textLength="5.24" lengthAdjust="spacingAndGlyphs">%</text>
<text x="431.30" y="528.80" font-size="6.4" fill="#333" stroke="#333" stroke-width="0.14" textLength="19.30" lengthAdjust="spacingAndGlyphs">HTTPS</text>
<text x="562.50" y="528.80" font-size="6.4" fill="#333" stroke="#333" stroke-width="0.14" textLength="18.00" lengthAdjust="spacingAndGlyphs">9h35m</text>
<text x="627.50" y="528.80" font-size="6.4" fill="#333" stroke="#333" stroke-width="0.14" textLength="18.00" lengthAdjust="spacingAndGlyphs">9h35m</text>
<text x="701.32" y="528.80" font-size="6.4" fill="#333" stroke="#333" stroke-width="0.14" textLength="8.18" lengthAdjust="spacingAndGlyphs">0m</text>
<text x="741.99" y="528.80" font-size="6.4" fill="#333" stroke="#333" stroke-width="0.14" textLength="8.51" lengthAdjust="spacingAndGlyphs">0%</text>
<text x="431.30" y="543.80" font-size="6.4" font-weight="bold" fill="#1a1a1a" textLength="13.63" lengthAdjust="spacingAndGlyphs">Total</text>
<text x="561.84" y="543.80" font-size="6.4" font-weight="bold" fill="#1a1a1a" textLength="18.66" lengthAdjust="spacingAndGlyphs">9h35m</text>
<text x="626.84" y="543.80" font-size="6.4" font-weight="bold" fill="#1a1a1a" textLength="18.66" lengthAdjust="spacingAndGlyphs">9h35m</text>
<text x="700.99" y="543.80" font-size="6.4" font-weight="bold" fill="#1a1a1a" textLength="8.51" lengthAdjust="spacingAndGlyphs">0m</text>
<text x="741.99" y="543.80" font-size="6.4" font-weight="bold" fill="#1a1a1a" textLength="8.51" lengthAdjust="spacingAndGlyphs">0%</text>
</svg>
</body></html>
